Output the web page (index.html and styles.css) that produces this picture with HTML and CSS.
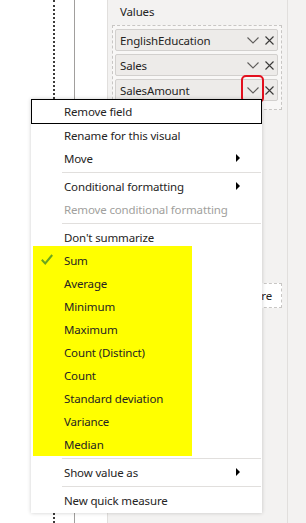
FILE: index.html
```html
<!DOCTYPE html>
<html lang="en">
<head>
    <meta charset="UTF-8">
    <meta name="viewport" content="width=device-width, initial-scale=1.0">
    <title>Values field menu</title>
    <link rel="stylesheet" href="styles.css">
</head>
<body>
    <div class="screen">
        <!-- Report canvas (left) -->
        <div class="canvas">
            <div class="dots"></div>
            <div class="rule"></div>
        </div>

        <!-- Visualizations pane -->
        <div class="pane">
            <div class="well-title">Values</div>
            <div class="well">
                <div class="pill">
                    <span class="pill-name">EnglishEducation</span>
                    <span class="pill-tools">
                        <svg class="chev" width="12" height="7" viewBox="0 0 12 7"><polyline points="0.5,0.5 6,6 11.5,0.5" fill="none" stroke="#605e5c" stroke-width="1.1"/></svg>
                        <svg class="close" width="9" height="9" viewBox="0 0 9 9"><path d="M0.5 0.5 L8.5 8.5 M8.5 0.5 L0.5 8.5" stroke="#3b3a39" stroke-width="1.1"/></svg>
                    </span>
                </div>
                <div class="pill">
                    <span class="pill-name">Sales</span>
                    <span class="pill-tools">
                        <svg class="chev" width="12" height="7" viewBox="0 0 12 7"><polyline points="0.5,0.5 6,6 11.5,0.5" fill="none" stroke="#605e5c" stroke-width="1.1"/></svg>
                        <svg class="close" width="9" height="9" viewBox="0 0 9 9"><path d="M0.5 0.5 L8.5 8.5 M8.5 0.5 L0.5 8.5" stroke="#3b3a39" stroke-width="1.1"/></svg>
                    </span>
                </div>
                <div class="pill">
                    <span class="pill-name">SalesAmount</span>
                    <span class="pill-tools">
                        <svg class="chev" width="12" height="7" viewBox="0 0 12 7"><polyline points="0.5,0.5 6,6 11.5,0.5" fill="none" stroke="#605e5c" stroke-width="1.1"/></svg>
                        <svg class="close" width="9" height="9" viewBox="0 0 9 9"><path d="M0.5 0.5 L8.5 8.5 M8.5 0.5 L0.5 8.5" stroke="#3b3a39" stroke-width="1.1"/></svg>
                    </span>
                </div>
            </div>
            <div class="drop">Add data fields here</div>
        </div>

        <div class="edge"></div>

        <!-- red annotation round the chevron -->
        <div class="focus-ring"></div>

        <!-- context menu -->
        <div class="menu">
            <div class="item item-focus">Remove field</div>
            <div class="item">Rename for this visual</div>
            <div class="item item-sub">Move <span class="arrow"></span></div>
            <div class="sep"></div>
            <div class="item item-sub">Conditional formatting <span class="arrow"></span></div>
            <div class="item item-off">Remove conditional formatting</div>
            <div class="sep"></div>
            <div class="item">Don't summarize</div>
            <div class="group">
                <div class="item">
                    <svg class="check" width="12" height="11" viewBox="0 0 12 11"><polyline points="0.8,5.8 4.2,9.4 11.2,1" fill="none" stroke="#6aa61e" stroke-width="2"/></svg>
                    Sum
                </div>
                <div class="item">Average</div>
                <div class="item">Minimum</div>
                <div class="item">Maximum</div>
                <div class="item">Count (Distinct)</div>
                <div class="item">Count</div>
                <div class="item">Standard deviation</div>
                <div class="item">Variance</div>
                <div class="item">Median</div>
            </div>
            <div class="sep"></div>
            <div class="item item-sub">Show value as <span class="arrow"></span></div>
            <div class="sep"></div>
            <div class="item">New quick measure</div>
        </div>
    </div>
</body>
</html>
```

FILE: styles.css
```css
body {
    margin: 0;
    font-family: "Noto Sans", "Open Sans", sans-serif;
    font-size: 11.5px;
    letter-spacing: -0.15px;
    color: #252423;
}
.screen {
    position: relative;
    display: flex;
    width: 306px;
    height: 523px;
    overflow: hidden;
    background: #ffffff;
}

/* canvas */
.canvas {
    display: flex;
    width: 107px;
    flex-shrink: 0;
    background: #ffffff;
}
.dots {
    margin-left: 53px;
    border-left: 2px dotted #3b3a39;
}
.rule {
    margin-left: 19px;
    border-left: 1px solid #a19f9d;
}

/* pane */
.pane {
    width: 181px;
    flex-shrink: 0;
    box-sizing: border-box;
    padding: 4px 5px 0 4px;
    background: #f3f2f1;
    border-left: 1px solid #e1dfdd;
    border-right: 1px solid #e1dfdd;
}
.well-title {
    height: 16px;
    line-height: 16px;
    padding-left: 8px;
    color: #252423;
}
.well {
    margin-top: 5px;
    padding: 3px 3px 8px 2px;
    border: 1px dashed #c8c6c4;
    background: #f8f7f6;
    display: flex;
    flex-direction: column;
    gap: 3px;
}
.pill {
    display: flex;
    align-items: center;
    justify-content: space-between;
    height: 22px;
    box-sizing: border-box;
    padding: 0 3px 0 4px;
    background: #edebe9;
    border: 1px solid #d2d0ce;
    border-radius: 2px;
}
.pill-tools {
    display: flex;
    align-items: center;
    gap: 6px;
}
.drop {
    margin-top: 173px;
    height: 25px;
    line-height: 23px;
    box-sizing: border-box;
    padding-right: 9px;
    text-align: right;
    white-space: nowrap;
    background: #ffffff;
    border: 1px dashed #c8c6c4;
}
.edge {
    flex: 1;
    background: #f3f2f1;
}

.focus-ring {
    position: absolute;
    left: 241px;
    top: 75px;
    width: 23px;
    height: 28px;
    box-sizing: border-box;
    border: 2px solid #e3101e;
    border-radius: 5px;
}

/* context menu */
.menu {
    position: absolute;
    left: 31px;
    top: 99px;
    width: 231px;
    padding-bottom: 1px;
    background: #ffffff;
    box-shadow: 0 0 4px rgba(0, 0, 0, 0.2);
}
.item {
    position: relative;
    display: flex;
    align-items: center;
    height: 23px;
    box-sizing: border-box;
    padding: 0 22px 1px 33px;
    white-space: nowrap;
}
.item-focus {
    height: 25px;
    padding-left: 32px;
    border: 1px solid #000000;
}
.item-sub {
    justify-content: space-between;
}
.item-off {
    color: #a19f9d;
}
.arrow {
    width: 0;
    height: 0;
    border-left: 4px solid #000000;
    border-top: 4px solid transparent;
    border-bottom: 4px solid transparent;
}
.sep {
    height: 1px;
    margin: 2px 1px 2px 31px;
    background: #e1dfdd;
}
.group {
    position: relative;
    width: 159px;
    margin: -3px 0 0 2px;
    padding-top: 3px;
    background: #ffff00;
}
.group .item {
    padding-left: 31px;
}
.check {
    position: absolute;
    left: 8px;
    top: 5px;
}
```
